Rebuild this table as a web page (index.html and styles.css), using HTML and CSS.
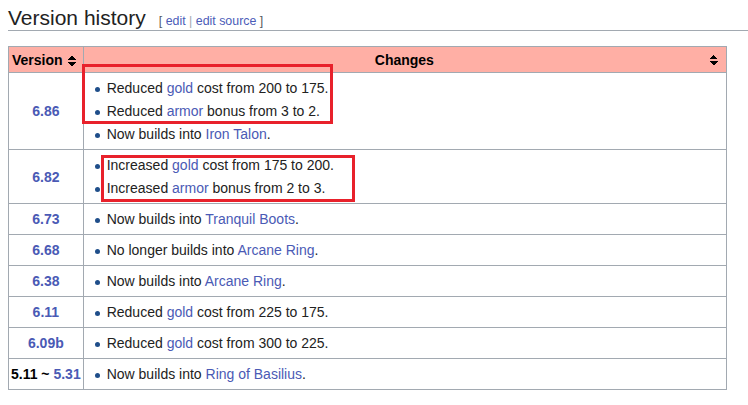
FILE: index.html
```html
<!DOCTYPE html>
<html>
<head>
<meta charset="utf-8">
<link rel="stylesheet" href="styles.css">
</head>
<body>
<div class="page">
  <h2 class="heading"><span class="title">Version history</span><span class="editsection"><span class="br">[</span> <a>edit</a> <span class="sep">|</span> <a>edit source</a> <span class="br">]</span></span></h2>
  <div class="tablewrap">
    <table class="history">
      <thead>
        <tr>
          <th class="vcol"><span>Version</span><span class="sort"></span></th>
          <th class="ccol"><span class="ctitle">Changes</span><span class="sort"></span></th>
        </tr>
      </thead>
      <tbody>
        <tr>
          <td class="ver"><a>6.86</a></td>
          <td><ul>
            <li>Reduced <a>gold</a> cost from 200 to 175.</li>
            <li>Reduced <a>armor</a> bonus from 3 to 2.</li>
            <li>Now builds into <a>Iron Talon</a>.</li>
          </ul></td>
        </tr>
        <tr>
          <td class="ver"><a>6.82</a></td>
          <td><ul>
            <li>Increased <a>gold</a> cost from 175 to 200.</li>
            <li>Increased <a>armor</a> bonus from 2 to 3.</li>
          </ul></td>
        </tr>
        <tr>
          <td class="ver"><a>6.73</a></td>
          <td><ul><li>Now builds into <a>Tranquil Boots</a>.</li></ul></td>
        </tr>
        <tr>
          <td class="ver"><a>6.68</a></td>
          <td><ul><li>No longer builds into <a>Arcane Ring</a>.</li></ul></td>
        </tr>
        <tr>
          <td class="ver"><a>6.38</a></td>
          <td><ul><li>Now builds into <a>Arcane Ring</a>.</li></ul></td>
        </tr>
        <tr>
          <td class="ver"><a>6.11</a></td>
          <td><ul><li>Reduced <a>gold</a> cost from 225 to 175.</li></ul></td>
        </tr>
        <tr>
          <td class="ver"><a>6.09b</a></td>
          <td><ul><li>Reduced <a>gold</a> cost from 300 to 225.</li></ul></td>
        </tr>
        <tr>
          <td class="ver"><span class="plain">5.11 ~ </span><a>5.31</a></td>
          <td><ul><li>Now builds into <a>Ring of Basilius</a>.</li></ul></td>
        </tr>
      </tbody>
    </table>
    <div class="mark mark1"></div>
    <div class="mark mark2"></div>
  </div>
</div>
</body>
</html>
```
FILE: styles.css
```css
html, body {
  margin: 0;
  padding: 0;
  background: #ffffff;
}
.page {
  padding: 0 0 0 8px;
  font-family: "Liberation Sans", Arial, sans-serif;
  color: #222222;
}
.heading {
  margin: 0;
  padding: 6px 0 0 0;
  height: 24px;
  font-weight: normal;
  font-size: 21px;
  line-height: 24px;
  color: #222222;
  border-bottom: 1px solid #a2a9b1;
  display: flex;
  align-items: baseline;
}
.title {
  margin-right: 13px;
}
.editsection {
  font-size: 12.4px;
  line-height: 14px;
  color: #54595d;
}
.editsection a {
  color: #4b5cb8;
}
.editsection .sep {
  color: #a2a9b1;
}
.tablewrap {
  position: relative;
  margin-top: 15px;
  width: 719px;
}
.history {
  border-collapse: collapse;
  width: 719px;
  font-size: 14px;
  background: #ffffff;
}
.history th,
.history td {
  border: 1px solid #a2a9b1;
}
.history th {
  background: #ffafa5;
  font-weight: bold;
  height: 25px;
  padding: 0 4px 0 3px;
  color: #000000;
}
.history th.vcol {
  width: 66px;
  text-align: left;
  white-space: nowrap;
}
.history th.ccol {
  position: relative;
  text-align: center;
}
.sort {
  display: inline-block;
  width: 8px;
  height: 10px;
  margin-left: 5px;
  vertical-align: -1px;
  background:
    linear-gradient(to bottom right, transparent 50%, #000 50%) 0 0 / 4px 4px no-repeat,
    linear-gradient(to bottom left, transparent 50%, #000 50%) 4px 0 / 4px 4px no-repeat,
    linear-gradient(to top right, transparent 50%, #000 50%) 0 6px / 4px 4px no-repeat,
    linear-gradient(to top left, transparent 50%, #000 50%) 4px 6px / 4px 4px no-repeat;
}
.ccol .sort {
  position: absolute;
  right: 8px;
  top: 8px;
  margin: 0;
}
.history td {
  padding: 4px 6px 3px 6px;
  vertical-align: middle;
}
.history td.ver {
  text-align: center;
  font-weight: bold;
  padding: 0 2px;
  white-space: nowrap;
}
.ver a {
  color: #3f51a3;
}
.ver .plain {
  color: #000000;
}
.history ul {
  margin: 0 0 0 17px;
  padding: 0;
  list-style: none;
}
.history li {
  position: relative;
  line-height: 23px;
}
.history li::before {
  content: "";
  position: absolute;
  left: -12px;
  top: 10px;
  width: 5px;
  height: 5px;
  border-radius: 50%;
  background: #1f4e8a;
}
.history td a {
  color: #4a5ab5;
}
.mark {
  position: absolute;
  box-sizing: border-box;
  border: 3px solid #e8212b;
}
.mark1 {
  left: 74px;
  top: 18px;
  width: 251px;
  height: 60px;
}
.mark2 {
  left: 93px;
  top: 109px;
  width: 254px;
  height: 47px;
}
```
